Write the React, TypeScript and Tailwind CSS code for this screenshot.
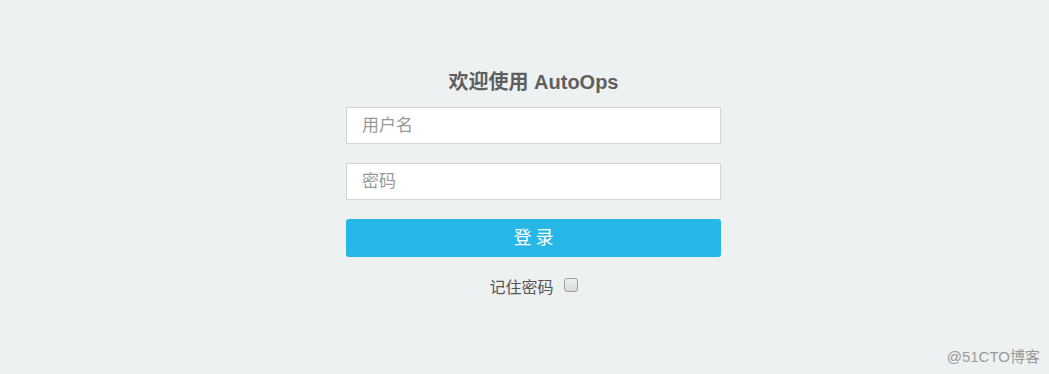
export default function App() {
  return (
    <div
      className="relative w-[1049px] h-[374px] bg-[#eef1f1] overflow-hidden"
      style={{ fontFamily: '"Liberation Sans", "Noto Sans CJK SC", sans-serif' }}
    >
      <div className="flex flex-col items-center pt-[68px] pl-[18px]">
        <h2 className="text-[20px] leading-[29px] font-bold text-[#5f5f5f]">欢迎使用 AutoOps</h2>
        <form className="w-[375px] flex flex-col mt-[10px]">
          <input
            type="text"
            placeholder="用户名"
            className="h-[37px] bg-white border border-[#d3d6d6] px-[15px] text-[17px] text-[#555] placeholder:text-[#999] outline-none"
          />
          <input
            type="password"
            placeholder="密码"
            className="h-[37px] mt-[19px] bg-white border border-[#d3d6d6] px-[15px] text-[17px] text-[#555] placeholder:text-[#999] outline-none"
          />
          <button
            type="button"
            className="h-[38px] mt-[19px] rounded-[3px] bg-[#27b7e6] text-white text-[18px] tracking-[4px] pl-[4px]"
          >
            登录
          </button>
          <label className="flex items-center justify-center mt-[19px] text-[16px] text-[#555]">
            记住密码
            <input
              type="checkbox"
              className="appearance-none ml-[10px] w-[14px] h-[14px] -mt-[6px] rounded-[3px] border border-[#a0a0a0] bg-gradient-to-b from-[#f0f0f0] to-[#d8d8d8]"
            />
          </label>
        </form>
      </div>
      {/* watermark */}
      <span className="absolute right-[9px] bottom-[6px] text-[15px] text-[#9a9a9a]">@51CTO博客</span>
    </div>
  );
}
